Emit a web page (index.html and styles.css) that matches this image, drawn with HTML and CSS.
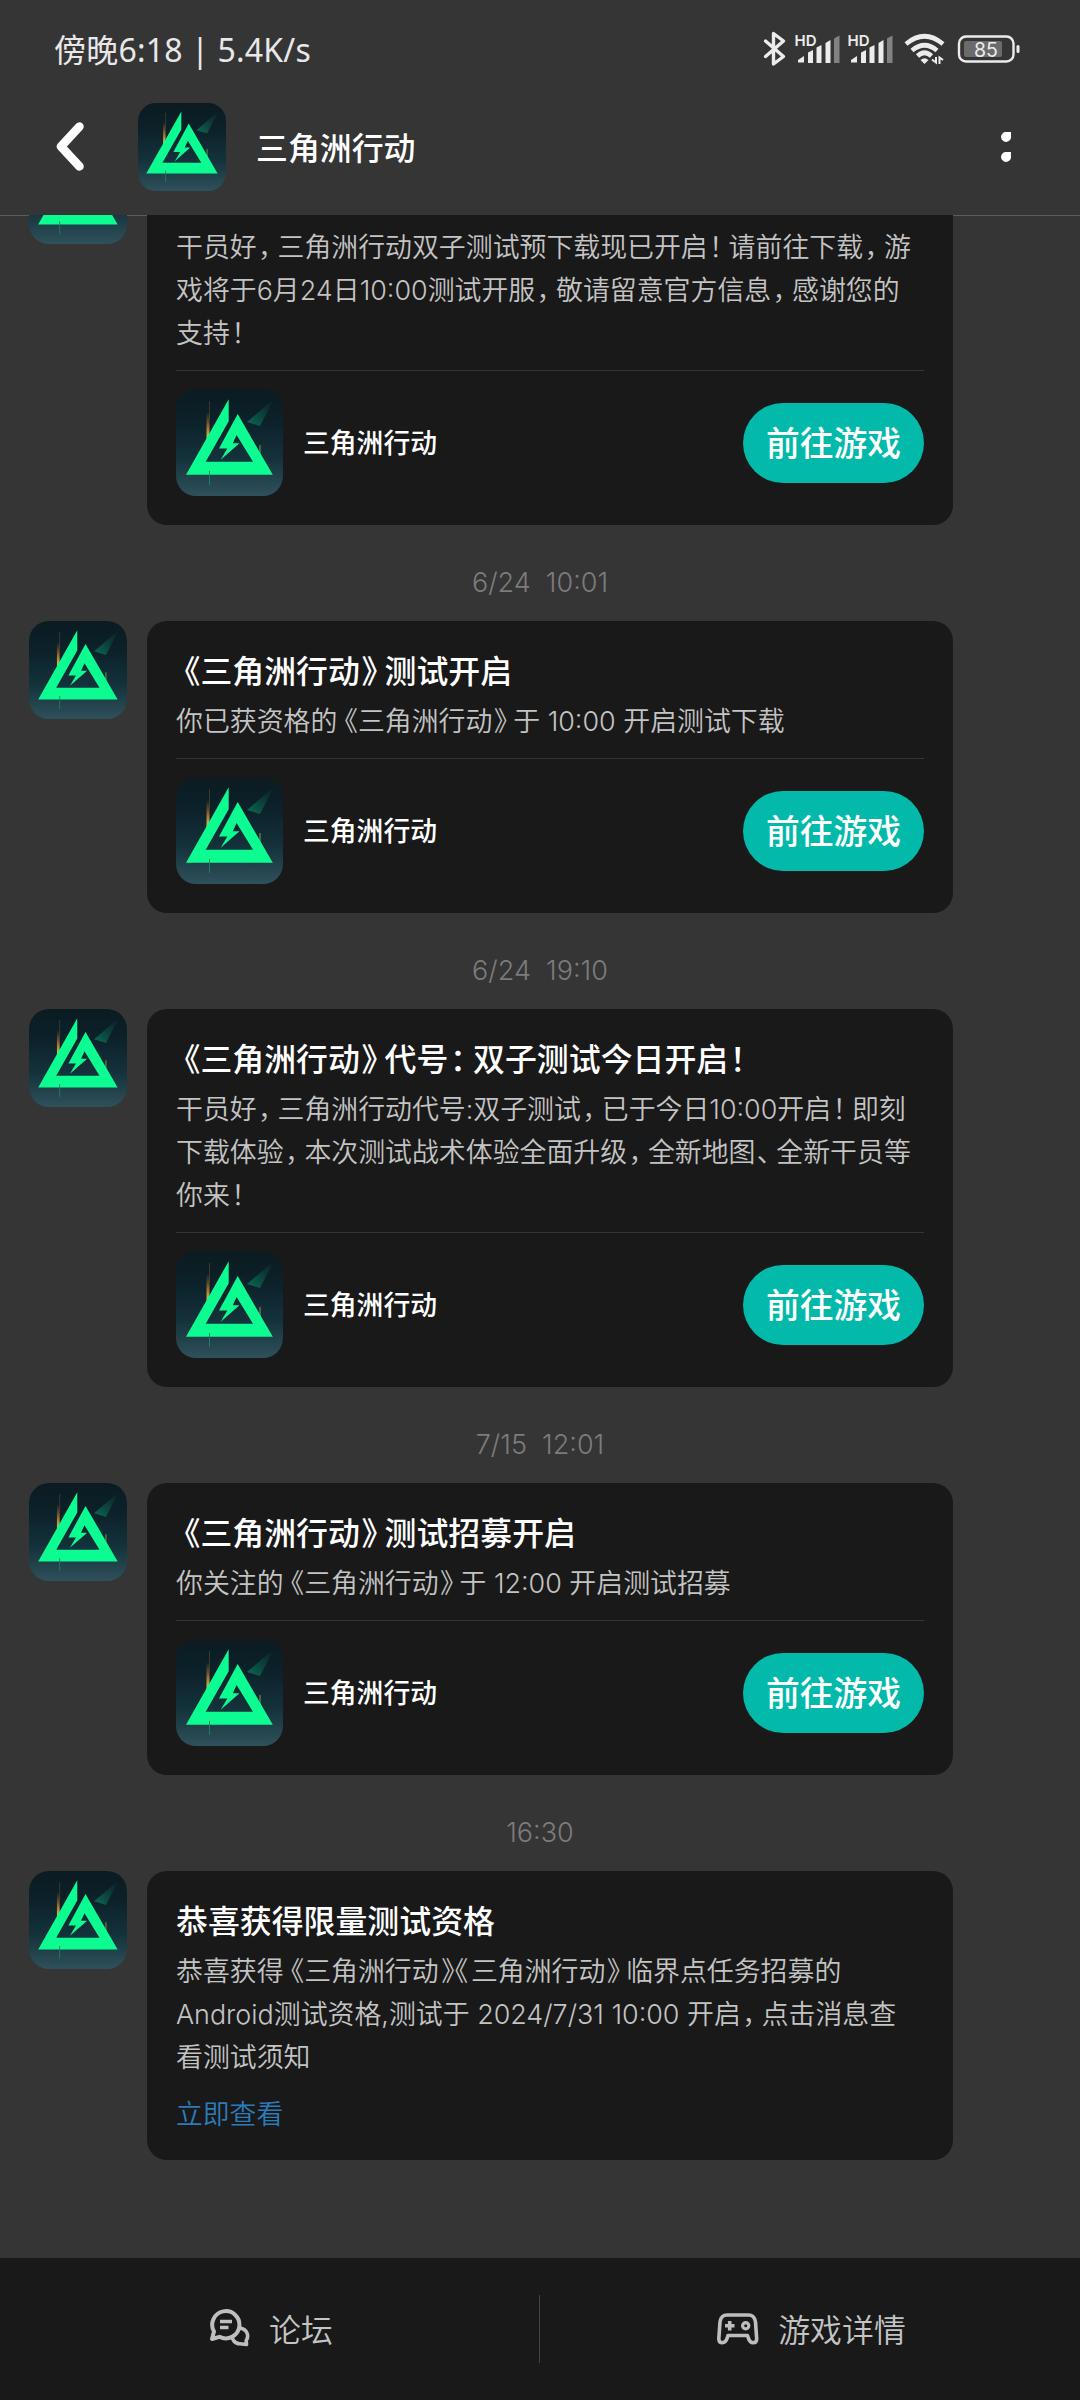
FILE: index.html
```html
<!DOCTYPE html>
<html lang="zh-CN">
<head>
<meta charset="utf-8">
<title>三角洲行动</title>
<link rel="stylesheet" href="styles.css">
</head>
<body>
<svg class="defs" aria-hidden="true">
  <defs>
    <linearGradient id="bg" x1="0" y1="0" x2="0" y2="1">
      <stop offset="0" stop-color="#0b1b21"/>
      <stop offset=".3" stop-color="#0c212a"/>
      <stop offset=".65" stop-color="#14323b"/>
      <stop offset="1" stop-color="#2f515b"/>
    </linearGradient>
    <linearGradient id="beam" x1="1" y1="0" x2="0" y2="1">
      <stop offset="0" stop-color="#0a5c4c" stop-opacity="0"/>
      <stop offset="1" stop-color="#0b7458" stop-opacity=".9"/>
    </linearGradient>
    <linearGradient id="spark" x1="0" y1="0" x2="0" y2="1">
      <stop offset="0" stop-color="#7a5a30" stop-opacity=".1"/>
      <stop offset=".5" stop-color="#a8682e"/>
      <stop offset="1" stop-color="#d8e05a"/>
    </linearGradient>
    <symbol id="logo" viewBox="0 0 107 107">
      <rect width="107" height="107" fill="url(#bg)"/>
      <path d="M98 10 71 33 84 37Z" fill="url(#beam)"/>
      <path d="M30.500 24h3v24l-3 4z" fill="url(#spark)"/>
      <path d="M33.500 12v20" stroke="#5d4a30" stroke-width=".6"/>
      <path d="M84 56v12" stroke="#8a9a50" stroke-width="1"/>
      <path fill="#0cfc92" d="M52.700 10.200V32.200L29.700 72.800H77L60.600 46 56.800 54.200H63.500L44.700 70.800 51.300 59.500H43L61.700 25 96.800 85.700H10Z"/>
      <path d="M33.500 82v14" stroke="#1d7d62" stroke-width="1"/>
    </symbol>
  </defs>
</svg>

<div class="screen">
  <header class="top">
    <div class="status">
      <span class="clock">傍晚6:18 | 5.4K/s</span>
      <svg class="tray" viewBox="760 28 264 42" fill="none">
        <path d="M765.500 41 783.500 56.500 773.500 64V33.500L783.500 41 765.500 56.500" stroke="#ececec" stroke-width="3.400" stroke-linejoin="round" stroke-linecap="round"/>
        <g id="sig">
          <text x="794.500" y="45.500" class="hd">HD</text>
          <path d="M798 60 804 56V62.500H798ZM808 52.500 813 50V63H808ZM816.500 47.500 821.500 45V63H816.500ZM825.500 43 830.500 40V63H825.500Z" fill="#ececec"/>
          <path d="M834 38.500 839.500 35.500V63H834Z" fill="#828282"/>
        </g>
        <use href="#sig" x="53"/>
        <path d="M906 44Q924.500 28.500 943 44M912 50.500Q924.500 40 937 50.500M917.500 56Q924.500 49.500 931.500 56" stroke="#ececec" stroke-width="4.600"/>
        <path d="M920.500 60Q924.500 56.500 928.500 60L924.500 64Z" fill="#ececec"/>
        <path d="M932 59.500 936 62.500V57M943 60 939.500 57.500V64" stroke="#ececec" stroke-width="2"/>
        <rect x="959" y="36.500" width="54.500" height="25" rx="7" stroke="#ececec" stroke-width="2.400"/>
        <rect x="964" y="41" width="38" height="16" rx="2" fill="#6b6b6b"/>
        <rect x="1016.500" y="45" width="3" height="8" rx="1.500" fill="#ececec"/>
        <text x="986" y="57" class="level">85</text>
      </svg>
    </div>
    <div class="bar">
      <svg class="back" viewBox="0 0 30 54"><path d="M23.500 5.500 5 25.500 23.500 45.500" fill="none" stroke="#fff" stroke-width="8.500" stroke-linecap="round" stroke-linejoin="round"/></svg>
      <svg class="logo bar-logo"><use href="#logo"/></svg>
      <h1>三角洲行动</h1>
      <svg class="more" viewBox="0 0 12 30" fill="#fff"><path d="M5 0H11V4A5 5 0 1 1 5 0ZM5 20H11V24A5 5 0 1 1 5 20Z"/></svg>
    </div>
  </header>

  <main class="feed">
    <article class="msg msg-first">
      <svg class="logo avatar"><use href="#logo"/></svg>
      <div class="card">
        <div class="body">
          <p>干员好<i>，</i>三角洲行动双子测试预下载现已开启<i>！</i>请前往下载<i>，</i>游</p>
          <p>戏将于6月24日10:00测试开服<i>，</i>敬请留意官方信息<i>，</i>感谢您的</p>
          <p>支持<i>！</i></p>
        </div>
        <div class="app"><svg class="logo app-logo"><use href="#logo"/></svg><span class="name">三角洲行动</span><button>前往游戏</button></div>
      </div>
    </article>

    <time>6/24&nbsp; 10:01</time>
    <article class="msg">
      <svg class="logo avatar"><use href="#logo"/></svg>
      <div class="card">
        <h2><b>《</b>三角洲行动<i>》</i>测试开启</h2>
        <div class="body"><p>你已获资格的<b>《</b>三角洲行动<i>》</i>于 10:00 开启测试下载</p></div>
        <div class="app"><svg class="logo app-logo"><use href="#logo"/></svg><span class="name">三角洲行动</span><button>前往游戏</button></div>
      </div>
    </article>

    <time>6/24&nbsp; 19:10</time>
    <article class="msg">
      <svg class="logo avatar"><use href="#logo"/></svg>
      <div class="card">
        <h2><b>《</b>三角洲行动<i>》</i>代号<i>：</i>双子测试今日开启<i>！</i></h2>
        <div class="body">
          <p>干员好<i>，</i>三角洲行动代号:双子测试<i>，</i>已于今日10:00开启<i>！</i>即刻</p>
          <p>下载体验<i>，</i>本次测试战术体验全面升级<i>，</i>全新地图<i>、</i>全新干员等</p>
          <p>你来<i>！</i></p>
        </div>
        <div class="app"><svg class="logo app-logo"><use href="#logo"/></svg><span class="name">三角洲行动</span><button>前往游戏</button></div>
      </div>
    </article>

    <time>7/15&nbsp; 12:01</time>
    <article class="msg">
      <svg class="logo avatar"><use href="#logo"/></svg>
      <div class="card">
        <h2><b>《</b>三角洲行动<i>》</i>测试招募开启</h2>
        <div class="body"><p>你关注的<b>《</b>三角洲行动<i>》</i>于 12:00 开启测试招募</p></div>
        <div class="app"><svg class="logo app-logo"><use href="#logo"/></svg><span class="name">三角洲行动</span><button>前往游戏</button></div>
      </div>
    </article>

    <time>16:30</time>
    <article class="msg">
      <svg class="logo avatar"><use href="#logo"/></svg>
      <div class="card card-link">
        <h2>恭喜获得限量测试资格</h2>
        <div class="body">
          <p>恭喜获得<b>《</b>三角洲行动<i class="tight">》</i><b class="tight">《</b>三角洲行动<i>》</i>临界点任务招募的</p>
          <p>Android测试资格,测试于 2024/7/31 10:00 开启<i>，</i>点击消息查</p>
          <p>看测试须知</p>
        </div>
        <a class="view">立即查看</a>
      </div>
    </article>
  </main>

  <footer class="tabs">
    <div class="tab">
      <svg class="chat" viewBox="0 0 40 38" fill="none" stroke="#bebebe">
        <path d="M36.200 31.500A7.800 7.800 0 1 0 30 34.800L36.500 35.500Z" stroke-width="3.600" stroke-linejoin="round"/>
        <path d="M2 30 4 22.500A13.600 13.600 0 1 1 9.500 27.800Z" fill="#191919" stroke-width="4" stroke-linejoin="round"/>
        <path d="M10 12.500H22M10 18.500H18.500" stroke-width="3.400"/>
      </svg>
      <span>论坛</span>
    </div>
    <div class="tab">
      <svg class="pad" viewBox="0 0 42 32" fill="none" stroke="#bebebe" stroke-width="3.600" stroke-linejoin="round">
        <path d="M10 2H31.500Q37.500 2 38.500 9L39.700 26Q39.700 29.700 36 29.700 32.800 29.700 31.500 25.500L30.500 22.500H11L10 25.500Q8.700 29.700 5.500 29.700 1.800 29.700 1.800 26L3 9Q4 2 10 2Z"/>
        <path d="M8 12.700H17.500M12.700 8V17.500"/><circle cx="28.700" cy="12.700" r="3.100" stroke-width="3.200"/>
      </svg>
      <span>游戏详情</span>
    </div>
  </footer>
</div>
</body>
</html>
```
FILE: styles.css
```css
* { box-sizing: border-box; }
body, h1, h2, p { margin: 0; }
body {
  background: #353535;
  font-family: Inter, "Noto Sans CJK SC", sans-serif;
  color: #fff;
}
.defs { position: absolute; width: 0; height: 0; }
.screen { width: 1080px; height: 2400px; display: flex; flex-direction: column; overflow: hidden; }

.top { flex: none; height: 215px; display: flex; flex-direction: column; }
.status { height: 100px; padding: 28px 56px 0 54px; display: flex; justify-content: space-between; align-items: flex-start; }
.clock { font: 32px/44px "Noto Sans", "Noto Sans CJK SC", sans-serif; letter-spacing: .2px; color: #e8e8e8; white-space: pre; }
.tray { width: 264px; height: 42px; }
.hd { font: 600 15px Inter, sans-serif; fill: #ececec; }
.level { font: 19.500px Inter, sans-serif; fill: #ececec; text-anchor: middle; }
.bar { height: 115px; padding: 3px 68px 0 56px; display: flex; align-items: flex-start; }
.back { width: 30px; height: 54px; margin-top: 18px; }
.bar-logo { width: 88px; height: 88px; margin-left: 52px; border-radius: 18px; }
.bar h1 { font: 500 31.900px/86px "Noto Sans CJK SC", sans-serif; margin-left: 30px; }
.more { width: 12px; height: 30px; margin: 29px 0 0 auto; }
.logo { display: block; flex: none; overflow: hidden; }

.feed { flex: none; height: 2043px; border-top: 1px solid #5c5c5c; display: flex; flex-direction: column; }
.msg { flex: none; display: flex; gap: 20px; padding-left: 29px; align-items: flex-start; }
.avatar { width: 98px; height: 98px; border-radius: 20px; }
.card { width: 806px; background: #191919; border-radius: 20px; padding: 29px 29px 29px; }
.msg-first { height: 310px; margin-top: -1px; overflow: hidden; align-items: flex-end; }
.msg-first .avatar { align-self: flex-start; margin-top: -69px; }
.msg-first .card { flex: none; }
h2 { font: 500 31.900px/44px Inter, "Noto Sans CJK SC", sans-serif; white-space: nowrap; }
.body { padding-top: 6px; color: #c4c4c4; }
.body p { font-size: 26.900px; line-height: 43px; font-weight: 350; white-space: nowrap; }

/* half-width punctuation with a little air on its open side */
i, b { font-style: normal; font-weight: inherit; font-feature-settings: "halt"; }
i { margin: 0 .225em 0 .05em; }
b { margin-left: .265em; }
i.tight { margin: 0 0 0 .1em; }
b.tight { margin: 0 .1em 0 0; }

.app { display: flex; align-items: center; border-top: 1px solid #343434; margin-top: 15px; padding-top: 18px; }
.app-logo { width: 107px; height: 107px; border-radius: 20px; }
.name { font: 500 26.800px/40px "Noto Sans CJK SC", sans-serif; margin: -2px 0 0 20px; }
button { margin-left: auto; border: 0; width: 181px; height: 80px; border-radius: 40px; background: #03b9aa; color: #fff; font: 500 33.800px/78px "Noto Sans CJK SC", sans-serif; padding: 0 0 2px; }
time { flex: none; height: 96px; padding-top: 38px; text-align: center; color: #7c7c7c; font-size: 27px; font-weight: 350; line-height: 40px; }
.card-link { height: 289px; }
.view { display: block; font-size: 26.800px; font-weight: 350; line-height: 40px; margin-top: 15px; color: #2b7cb9; }

.tabs { flex: none; height: 142px; background: #191919; display: flex; }
.tab { flex: 1; display: flex; justify-content: center; align-items: center; padding-left: 3px; color: #c4c4c4; font: 350 31.900px/44px "Noto Sans CJK SC", sans-serif; position: relative; }
.tab span { margin-top: -3px; }
.tab + .tab::before { content: ""; position: absolute; left: -1px; top: 37px; width: 1px; height: 68px; background: #444; }
.chat { width: 40px; height: 38px; margin: -3px 19px 0 0; }
.pad { width: 42px; height: 32px; margin: -1px 19px 0 0; }
```
